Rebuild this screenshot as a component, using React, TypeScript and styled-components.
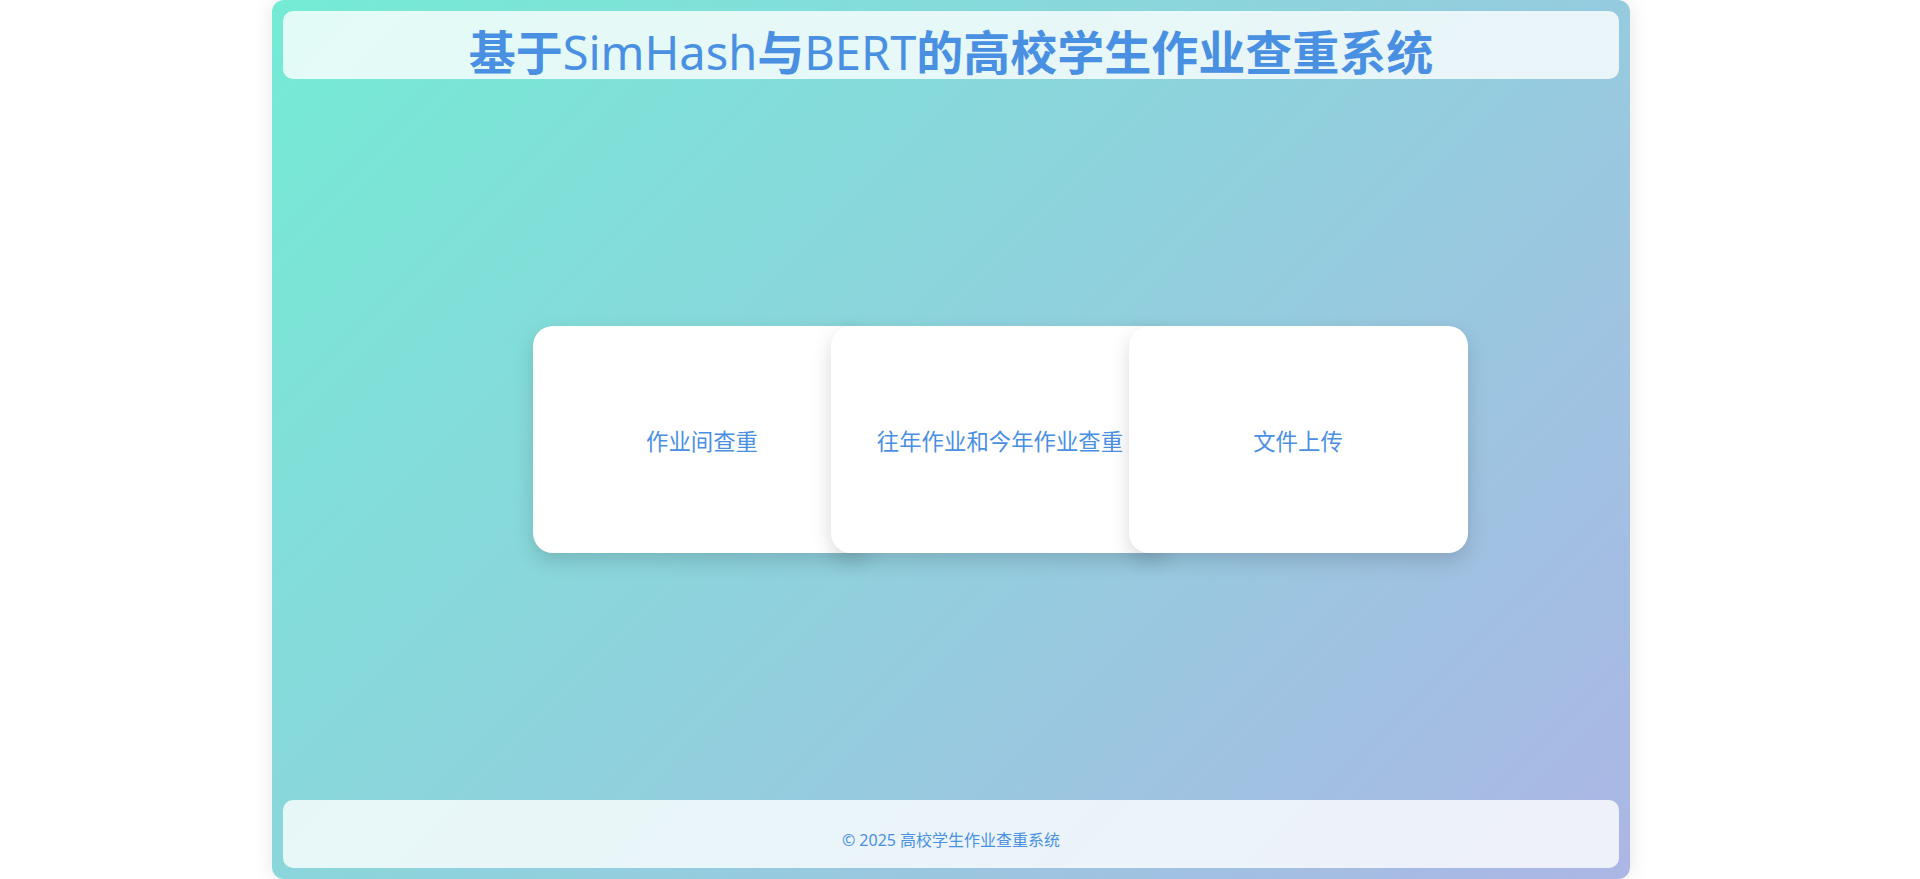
import React from "react";
import styled, { createGlobalStyle } from "styled-components";

const GlobalStyle = createGlobalStyle`
  html, body {
    margin: 0;
    padding: 0;
    background: #ffffff;
    font-family: "Noto Sans", "Noto Sans CJK SC", sans-serif;
  }
`;

const Shell = styled.div`
  width: 1358px;
  height: 879px;
  margin: 0 0 0 272px;
  box-sizing: border-box;
  padding: 11px;
  display: flex;
  flex-direction: column;
  border-radius: 12px;
  background: linear-gradient(135deg, #74ebd5 0%, #acb6e5 100%);
  box-shadow: 0 0 20px rgba(0, 0, 0, 0.1);
`;

const Header = styled.header`
  height: 68px;
  flex: none;
  border-radius: 10px;
  background: rgba(255, 255, 255, 0.8);
  display: flex;
  justify-content: center;
  align-items: flex-start;
`;

const Title = styled.h1`
  margin: 0;
  padding-top: 5px;
  font-family: "Noto Sans CJK SC", sans-serif;
  font-size: 47px;
  font-weight: 700;
  line-height: 1.45;
  color: #4a90e2;
  white-space: nowrap;
`;

const Latin = styled.span`
  font-family: "Noto Sans", "Open Sans", sans-serif;
  font-weight: 400;
`;

const Main = styled.main`
  flex: 1;
  display: flex;
  align-items: center;
  justify-content: center;
  padding-left: 98px;
`;

const Card = styled.div<{ $first?: boolean }>`
  position: relative;
  width: 339px;
  height: 227px;
  flex: none;
  margin-left: ${(p) => (p.$first ? "0" : "-41px")};
  border-radius: 20px;
  background: #ffffff;
  box-shadow: 0 8px 20px rgba(0, 0, 0, 0.15);
  display: flex;
  align-items: center;
  justify-content: center;
  font-family: "Noto Sans CJK SC", sans-serif;
  font-size: 22.4px;
  color: #4a90e2;
  white-space: nowrap;
`;

const Footer = styled.footer`
  height: 68px;
  flex: none;
  box-sizing: border-box;
  padding-top: 10px;
  border-radius: 10px;
  background: rgba(255, 255, 255, 0.8);
  display: flex;
  align-items: center;
  justify-content: center;
  font-family: "Noto Sans", "Noto Sans CJK SC", sans-serif;
  font-size: 16px;
  color: #4a90e2;
`;

export default function App() {
  return (
    <>
      <GlobalStyle />
      <Shell>
        <Header>
          <Title>
            基于<Latin>SimHash</Latin>与<Latin>BERT</Latin>的高校学生作业查重系统
          </Title>
        </Header>
        <Main>
          <Card $first>作业间查重</Card>
          <Card>往年作业和今年作业查重</Card>
          <Card>文件上传</Card>
        </Main>
        <Footer>© 2025 高校学生作业查重系统</Footer>
      </Shell>
    </>
  );
}
